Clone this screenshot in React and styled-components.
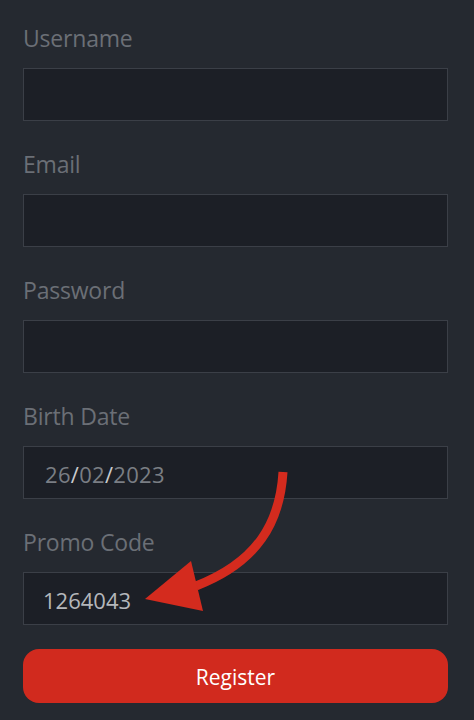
import React from "react";
import styled, { createGlobalStyle } from "styled-components";

const Global = createGlobalStyle`
  html, body { margin: 0; padding: 0; background: #252930; }
  body { font-family: "Open Sans", "Noto Sans", sans-serif; }
  * { box-sizing: border-box; }
`;

const Page = styled.div`
  position: relative;
  width: 474px;
  height: 720px;
  background: #252930;
  overflow: hidden;
  padding: 24px 26px 0 23px;
  display: flex;
  flex-direction: column;
  gap: 29px;
`;

const Field = styled.div`
  display: flex;
  flex-direction: column;
  gap: 16px;
`;

const Label = styled.div`
  font-size: 23px;
  line-height: 28px;
  color: #6b6f76;
  letter-spacing: -0.2px;
`;

const Box = styled.div`
  height: 53px;
  background: #1c1f26;
  border: 1px solid #3b3f47;
  display: flex;
  align-items: center;
  padding: 3px 0 0 ${(p) => (p.$date ? 21 : 19)}px;
  font-size: 22px;
  color: ${(p) => (p.$date ? "#7a7e84" : "#b4b7bb")};
  letter-spacing: ${(p) => (p.$date ? "0.3px" : "0")};
`;

const Slash = styled.span`
  color: #c9cbce;
`;

const Button = styled.button`
  margin-top: -5px;
  height: 54px;
  width: 100%;
  border: none;
  border-radius: 16px;
  background: #d12a1e;
  color: #ffffff;
  font-family: "Open Sans", sans-serif;
  font-size: 21px;
  font-weight: 500;
  display: flex;
  align-items: center;
  justify-content: center;
  padding-top: 2px;
`;

const Overlay = styled.svg`
  position: absolute;
  left: 0;
  top: 0;
  pointer-events: none;
`;

const fields = [
  { label: "Username" },
  { label: "Email" },
  { label: "Password" },
];

export default function App() {
  return (
    <>
      <Global />
      <Page>
        {fields.map((f) => (
          <Field key={f.label}>
            <Label>{f.label}</Label>
            <Box />
          </Field>
        ))}
        <Field>
          <Label>Birth Date</Label>
          <Box $date>
            26<Slash>/</Slash>02<Slash>/</Slash>2023
          </Box>
        </Field>
        <Field>
          <Label>Promo Code</Label>
          <Box>1264043</Box>
        </Field>
        <Button>Register</Button>
        <Overlay width="474" height="720" viewBox="0 0 474 720">
          <path
            d="M 283 472 C 280 522, 258 562, 196 586"
            fill="none"
            stroke="#d42b1e"
            strokeWidth="9"
          />
          <polygon points="145,599 191,561 203,611" fill="#d42b1e" />
        </Overlay>
      </Page>
    </>
  );
}
